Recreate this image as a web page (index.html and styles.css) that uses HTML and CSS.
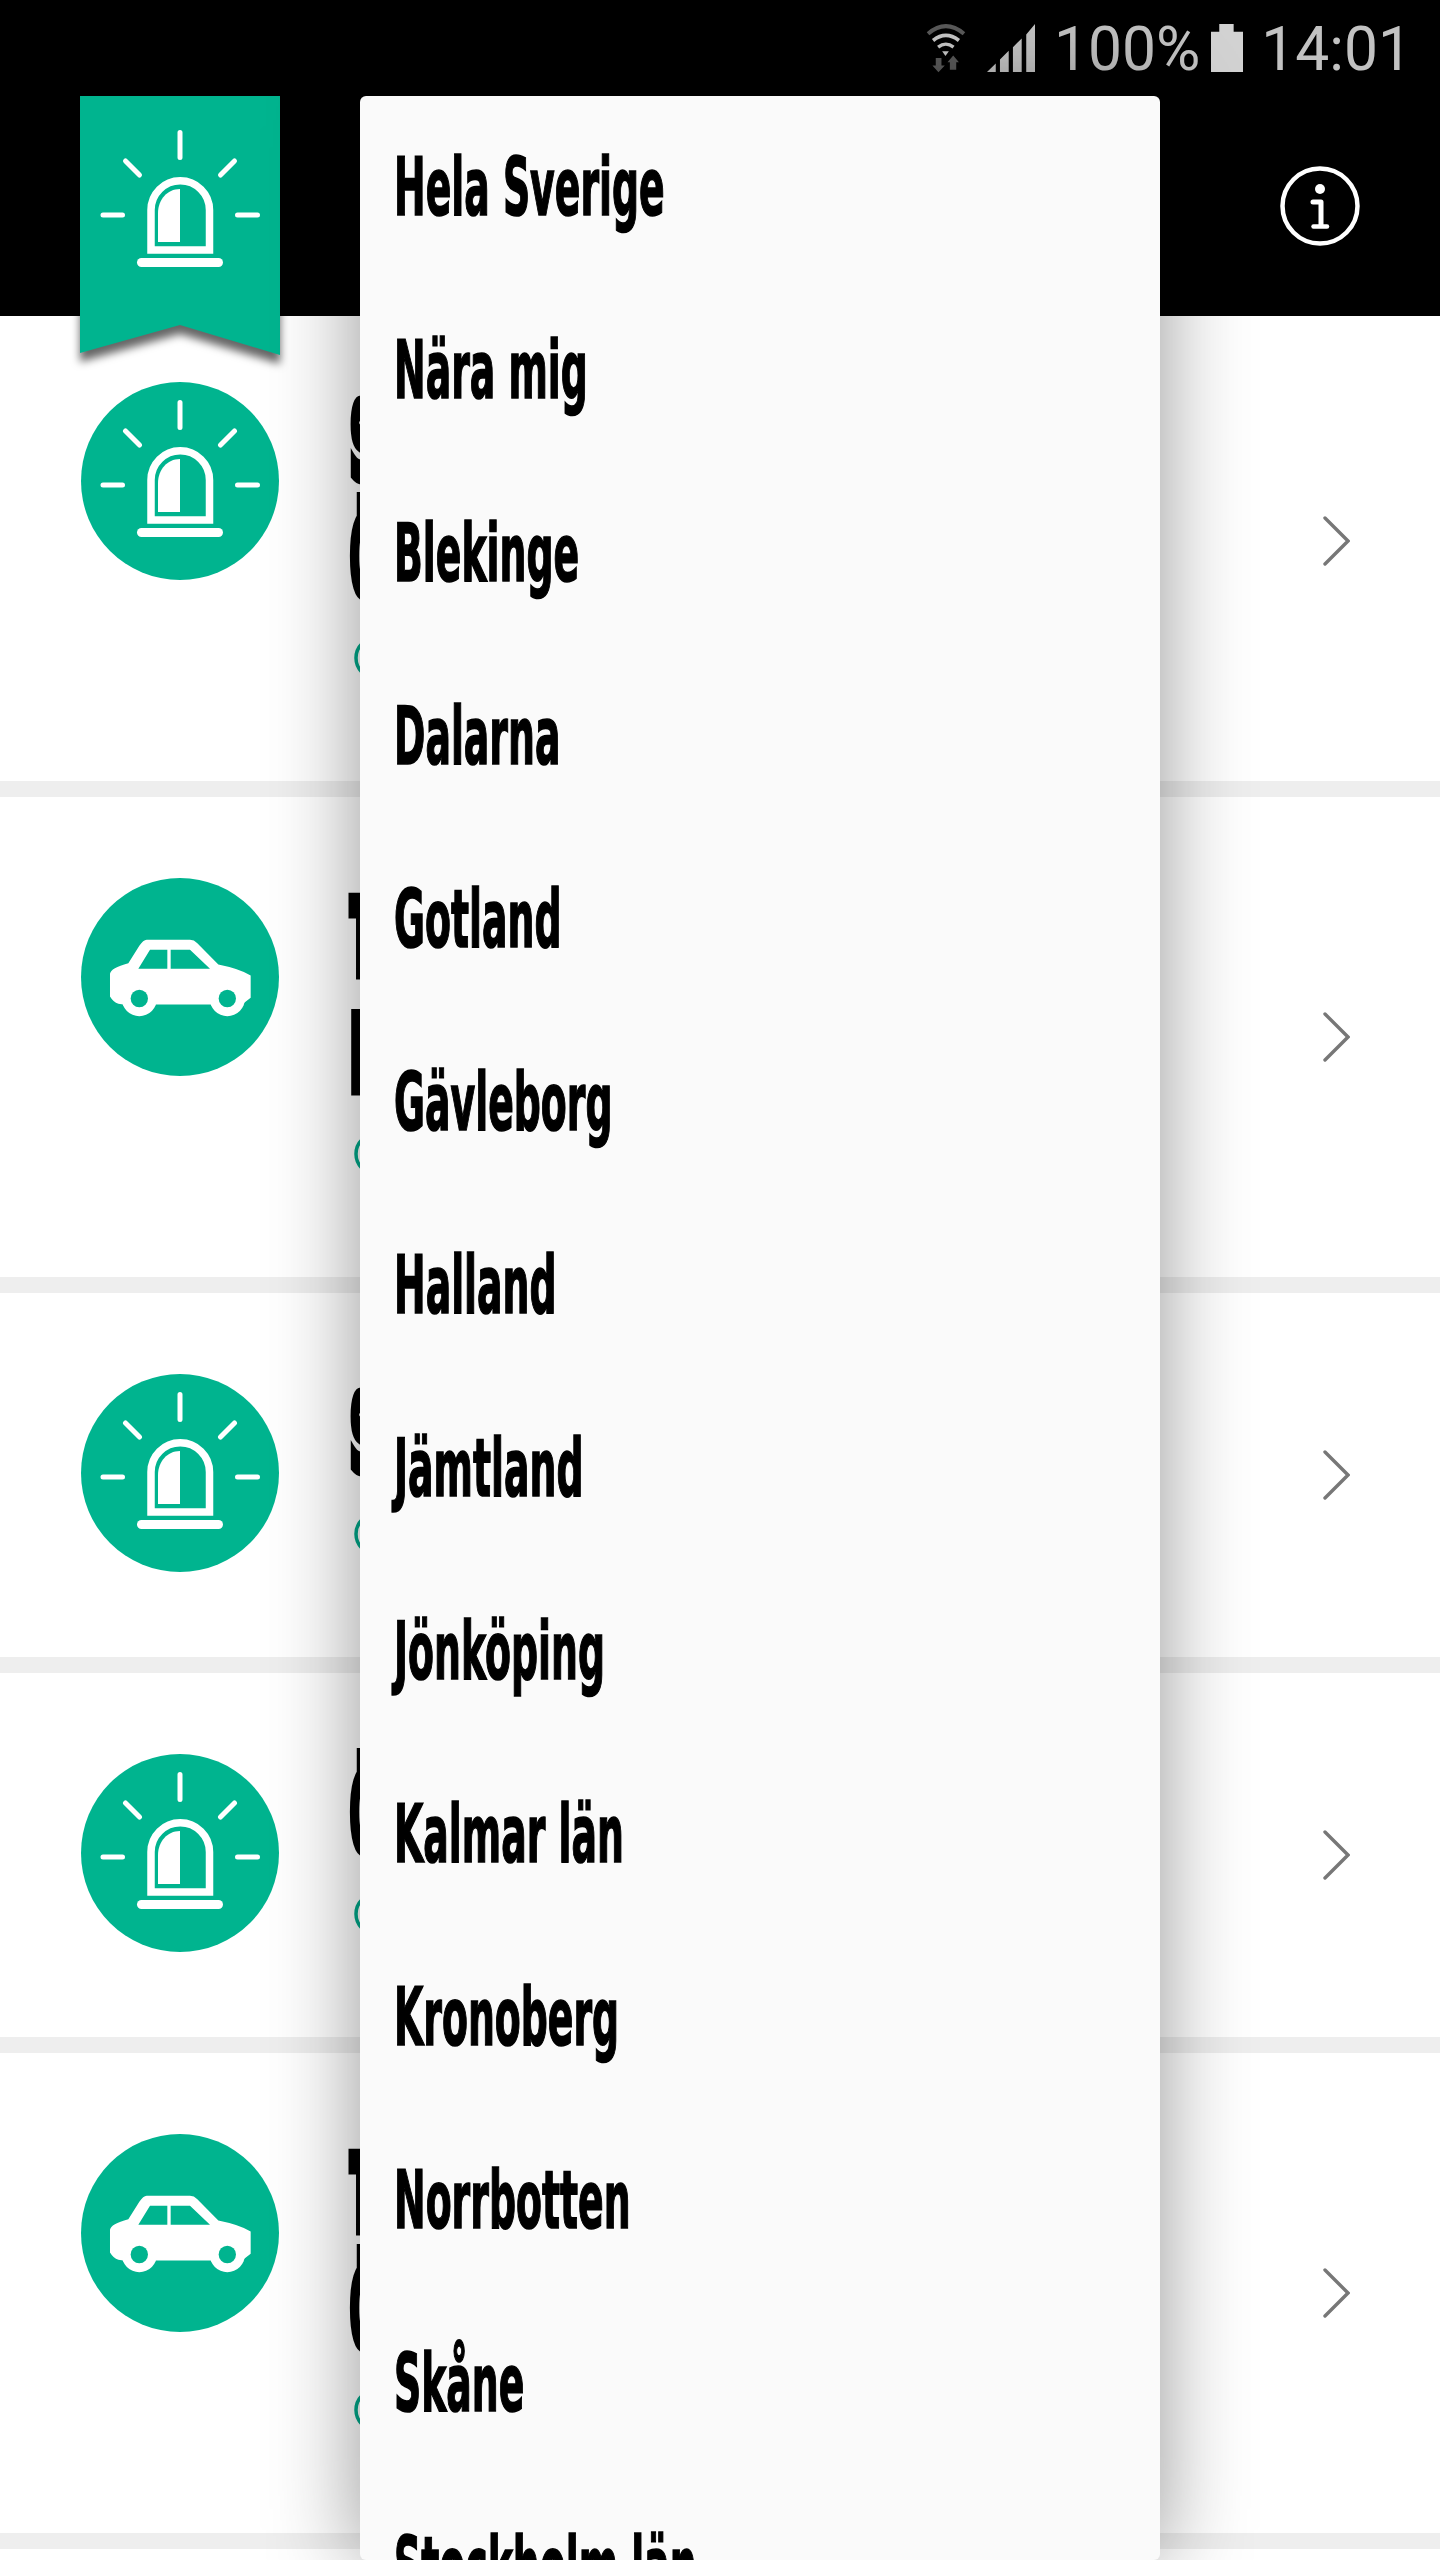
FILE: index.html
```html
<!DOCTYPE html>
<html lang="sv">
<head>
<meta charset="utf-8">
<title>Händelser</title>
<link rel="stylesheet" href="styles.css">
</head>
<body>
<svg class="defs" width="0" height="0" aria-hidden="true">
  <symbol id="siren" viewBox="0 0 198 198">
    <g fill="none" stroke="#fff" stroke-width="5" stroke-linecap="round">
      <path d="M99 20.5V45.5M44.5 49L58.5 63M153.500 49L139.500 63M22 103H41.500M156.500 103H176.500"/>
      <path stroke-width="7.500" stroke-linecap="butt" d="M70 138V98a29.250 29.250 0 0 1 58.500 0V138Z"/>
    </g>
    <path fill="#fff" d="M99 77C86 77 77 88 77 101V130H99Z"/>
    <rect fill="#fff" x="56" y="146" width="86" height="9" rx="4.500"/>
  </symbol>
  <symbol id="car" viewBox="0 0 198 198">
    <g transform="translate(-41 -117.500) scale(.33333)">
      <path fill="#fff" d="M320 538H450Q462 538 472 548L535 612Q600 625 632 645V712L606 732H250L235 730Q220 725 210 708V640Q212 622 265 608L298 556Q310 538 320 538Z"/>
      <circle fill="#fff" cx="298" cy="714" r="53"/>
      <circle fill="#fff" cx="562" cy="714" r="53"/>
      <circle fill="#00b48f" cx="298" cy="714" r="26"/>
      <circle fill="#00b48f" cx="562" cy="714" r="26"/>
      <path fill="#00b48f" d="M295 625L330 568H382V625ZM392 568H450L510 625H392Z"/>
    </g>
  </symbol>
</svg>

<header class="header">
  <div class="statusbar">
    <svg class="st-wifi" viewBox="120 65 130 155" width="45" height="52">
      <path d="M130 100Q183 55 237 100" fill="none" stroke="#5a5a5a" stroke-width="12"/>
      <path d="M145 120Q183 90 222 120" fill="none" stroke="#c8c8c8" stroke-width="11"/>
      <path d="M160 140Q183 122 206 140" fill="none" stroke="#c8c8c8" stroke-width="10"/>
      <path d="M172 152H192L182 166Z" fill="#c8c8c8"/>
      <path d="M153 172H170V195H180L161 215L143 195H153Z" fill="#5a5a5a"/>
      <path d="M205 165L222 185H214V207H195V185H188Z" fill="#5a5a5a"/>
    </svg>
    <svg class="st-signal" viewBox="288 72 137 143" width="48" height="48" preserveAspectRatio="none">
      <path fill="#c4c4c4" d="M288 215L313 190V215ZM325 215V178L350 152V215ZM362 215V141L387 115V215ZM400 215V103L425 72V215Z"/>
    </svg>
    <span class="st-text st-pct">100%</span>
    <svg class="st-batt" viewBox="925 72 89 143" width="32" height="48" preserveAspectRatio="none">
      <path fill="#d2d2d2" d="M948 72H988V95H1014V215H925V95H948Z"/>
    </svg>
    <span class="st-text st-time">14:01</span>
  </div>
  <div class="toolbar">
    <svg class="info" viewBox="0 0 80 80" width="80" height="80">
      <circle cx="40" cy="40" r="37.500" fill="none" stroke="#fff" stroke-width="4.500"/>
      <circle cx="40" cy="23" r="5" fill="#fff"/>
      <path d="M33 36H41V59" fill="none" stroke="#fff" stroke-width="5" stroke-linecap="round" stroke-linejoin="round"/>
      <path d="M33.500 60.500H47" fill="none" stroke="#fff" stroke-width="4.500" stroke-linecap="round"/>
    </svg>
  </div>
</header>

<div class="ribbon">
  <div class="ribbon-shape">
    <svg class="ribbon-icon" width="198" height="198"><use href="#siren"/></svg>
  </div>
</div>

<main class="list">
  <article class="row">
    <div class="badge"><svg width="198" height="198"><use href="#siren"/></svg></div>
    <div class="body">
      <div class="title"><span>S</span></div>
      <div class="title"><span>Ö</span></div>
      <svg class="clock" width="44" height="44"><circle cx="22" cy="22" r="20" fill="none" stroke="#00a98a" stroke-width="3.500"/></svg>
    </div>
    <svg class="chev" width="28" height="52" viewBox="0 0 28 52"><path d="M3 3L26 26L3 49" fill="none" stroke="#777" stroke-width="3.400" stroke-linecap="round"/></svg>
  </article>
  <article class="row">
    <div class="badge"><svg width="198" height="198"><use href="#car"/></svg></div>
    <div class="body">
      <div class="title"><span>T</span></div>
      <div class="title"><span>N</span></div>
      <svg class="clock" width="44" height="44"><circle cx="22" cy="22" r="20" fill="none" stroke="#00a98a" stroke-width="3.500"/></svg>
    </div>
    <svg class="chev" width="28" height="52" viewBox="0 0 28 52"><path d="M3 3L26 26L3 49" fill="none" stroke="#777" stroke-width="3.400" stroke-linecap="round"/></svg>
  </article>
  <article class="row">
    <div class="badge"><svg width="198" height="198"><use href="#siren"/></svg></div>
    <div class="body">
      <div class="title"><span>S</span></div>
      <svg class="clock" width="44" height="44"><circle cx="22" cy="22" r="20" fill="none" stroke="#00a98a" stroke-width="3.500"/></svg>
    </div>
    <svg class="chev" width="28" height="52" viewBox="0 0 28 52"><path d="M3 3L26 26L3 49" fill="none" stroke="#777" stroke-width="3.400" stroke-linecap="round"/></svg>
  </article>
  <article class="row">
    <div class="badge"><svg width="198" height="198"><use href="#siren"/></svg></div>
    <div class="body">
      <div class="title"><span>Ö</span></div>
      <svg class="clock" width="44" height="44"><circle cx="22" cy="22" r="20" fill="none" stroke="#00a98a" stroke-width="3.500"/></svg>
    </div>
    <svg class="chev" width="28" height="52" viewBox="0 0 28 52"><path d="M3 3L26 26L3 49" fill="none" stroke="#777" stroke-width="3.400" stroke-linecap="round"/></svg>
  </article>
  <article class="row">
    <div class="badge"><svg width="198" height="198"><use href="#car"/></svg></div>
    <div class="body">
      <div class="title"><span>T</span></div>
      <div class="title"><span>Ö</span></div>
      <svg class="clock" width="44" height="44"><circle cx="22" cy="22" r="20" fill="none" stroke="#00a98a" stroke-width="3.500"/></svg>
    </div>
    <svg class="chev" width="28" height="52" viewBox="0 0 28 52"><path d="M3 3L26 26L3 49" fill="none" stroke="#777" stroke-width="3.400" stroke-linecap="round"/></svg>
  </article>
</main>

<nav class="menu">
  <div class="item"><span>Hela Sverige</span></div>
  <div class="item"><span>Nära mig</span></div>
  <div class="item"><span>Blekinge</span></div>
  <div class="item"><span>Dalarna</span></div>
  <div class="item"><span>Gotland</span></div>
  <div class="item"><span>Gävleborg</span></div>
  <div class="item"><span>Halland</span></div>
  <div class="item"><span>Jämtland</span></div>
  <div class="item"><span>Jönköping</span></div>
  <div class="item"><span>Kalmar län</span></div>
  <div class="item"><span>Kronoberg</span></div>
  <div class="item"><span>Norrbotten</span></div>
  <div class="item"><span>Skåne</span></div>
  <div class="item"><span>Stockholm län</span></div>
</nav>
</body>
</html>
```

FILE: styles.css
```css
html, body {
  margin: 0;
  height: 2560px;
  overflow: hidden;
  background: #fff;
}
body {
  position: relative;
  font-family: "DejaVu Sans", sans-serif;
}
.defs { position: absolute; }

.header {
  position: relative;
  z-index: 1;
  height: 316px;
  background: #000;
  display: flex;
  flex-direction: column;
}
.statusbar {
  height: 96px;
  flex: none;
  display: flex;
  justify-content: flex-end;
  align-items: flex-start;
  padding-right: 28px;
}
.st-wifi { margin-top: 22px; }
.st-signal { margin: 24px 0 0 18px; }
.st-batt { margin: 24px 0 0 11px; }
.st-text {
  font-family: Roboto, sans-serif;
  font-size: 60.500px;
  line-height: 50px;
  color: #c2c2c2;
  margin-top: 25px;
}
.st-pct { margin-left: 19px; }
.st-time { margin-left: 18px; }
.toolbar {
  flex: 1;
  display: flex;
  align-items: center;
  justify-content: flex-end;
  padding-right: 80px;
}

.ribbon {
  position: absolute;
  z-index: 2;
  left: 80px;
  top: 96px;
  width: 200px;
  height: 260px;
  filter: drop-shadow(0 9px 4px rgba(0, 0, 0, .6));
}
.ribbon-shape {
  box-sizing: border-box;
  height: 100%;
  padding: 16px 0 0 1px;
  background: #00b48f;
  clip-path: polygon(0 0, 100% 0, 100% 259px, 50% 229px, 0 257px);
}
.ribbon-icon { display: block; }

.list { margin-top: -15px; }
.row {
  display: flex;
  align-items: center;
  background: #fff;
  border-bottom: 16px solid #eeeeee;
}
.badge {
  align-self: flex-start;
  flex: none;
  width: 198px;
  height: 198px;
  margin: 81px 0 0 81px;
  border-radius: 50%;
  background: #00b48f;
}
.badge svg { display: block; }
.body {
  flex: 1;
  padding: 84px 0 101px 71px;
}
.title {
  height: 116px;
  line-height: 116px;
  font-size: 94px;
  font-weight: 700;
  color: #000;
  white-space: nowrap;
}
.title span {
  display: inline-block;
  transform: scale(.33, 1.1);
  transform-origin: 0 50%;
  -webkit-text-stroke: 10px #000;
}
.clock {
  display: block;
  margin: 19px 0 0 4px;
}
.chev {
  flex: none;
  margin-right: 90px;
}

.menu {
  position: absolute;
  z-index: 3;
  left: 360px;
  top: 96px;
  width: 800px;
  height: 2464px;
  overflow: hidden;
  background: #fafafa;
  border-radius: 6px;
  box-shadow: 0 0 90px rgba(0, 0, 0, .42);
}
.item {
  height: 183px;
  display: flex;
  align-items: center;
  padding-left: 34px;
  font-size: 70px;
  font-weight: 700;
  color: #000;
  white-space: nowrap;
}
.item span {
  display: block;
  transform: scale(.54, 1.137);
  transform-origin: 0 50%;
  -webkit-text-stroke: 1.500px #000;
}
```
